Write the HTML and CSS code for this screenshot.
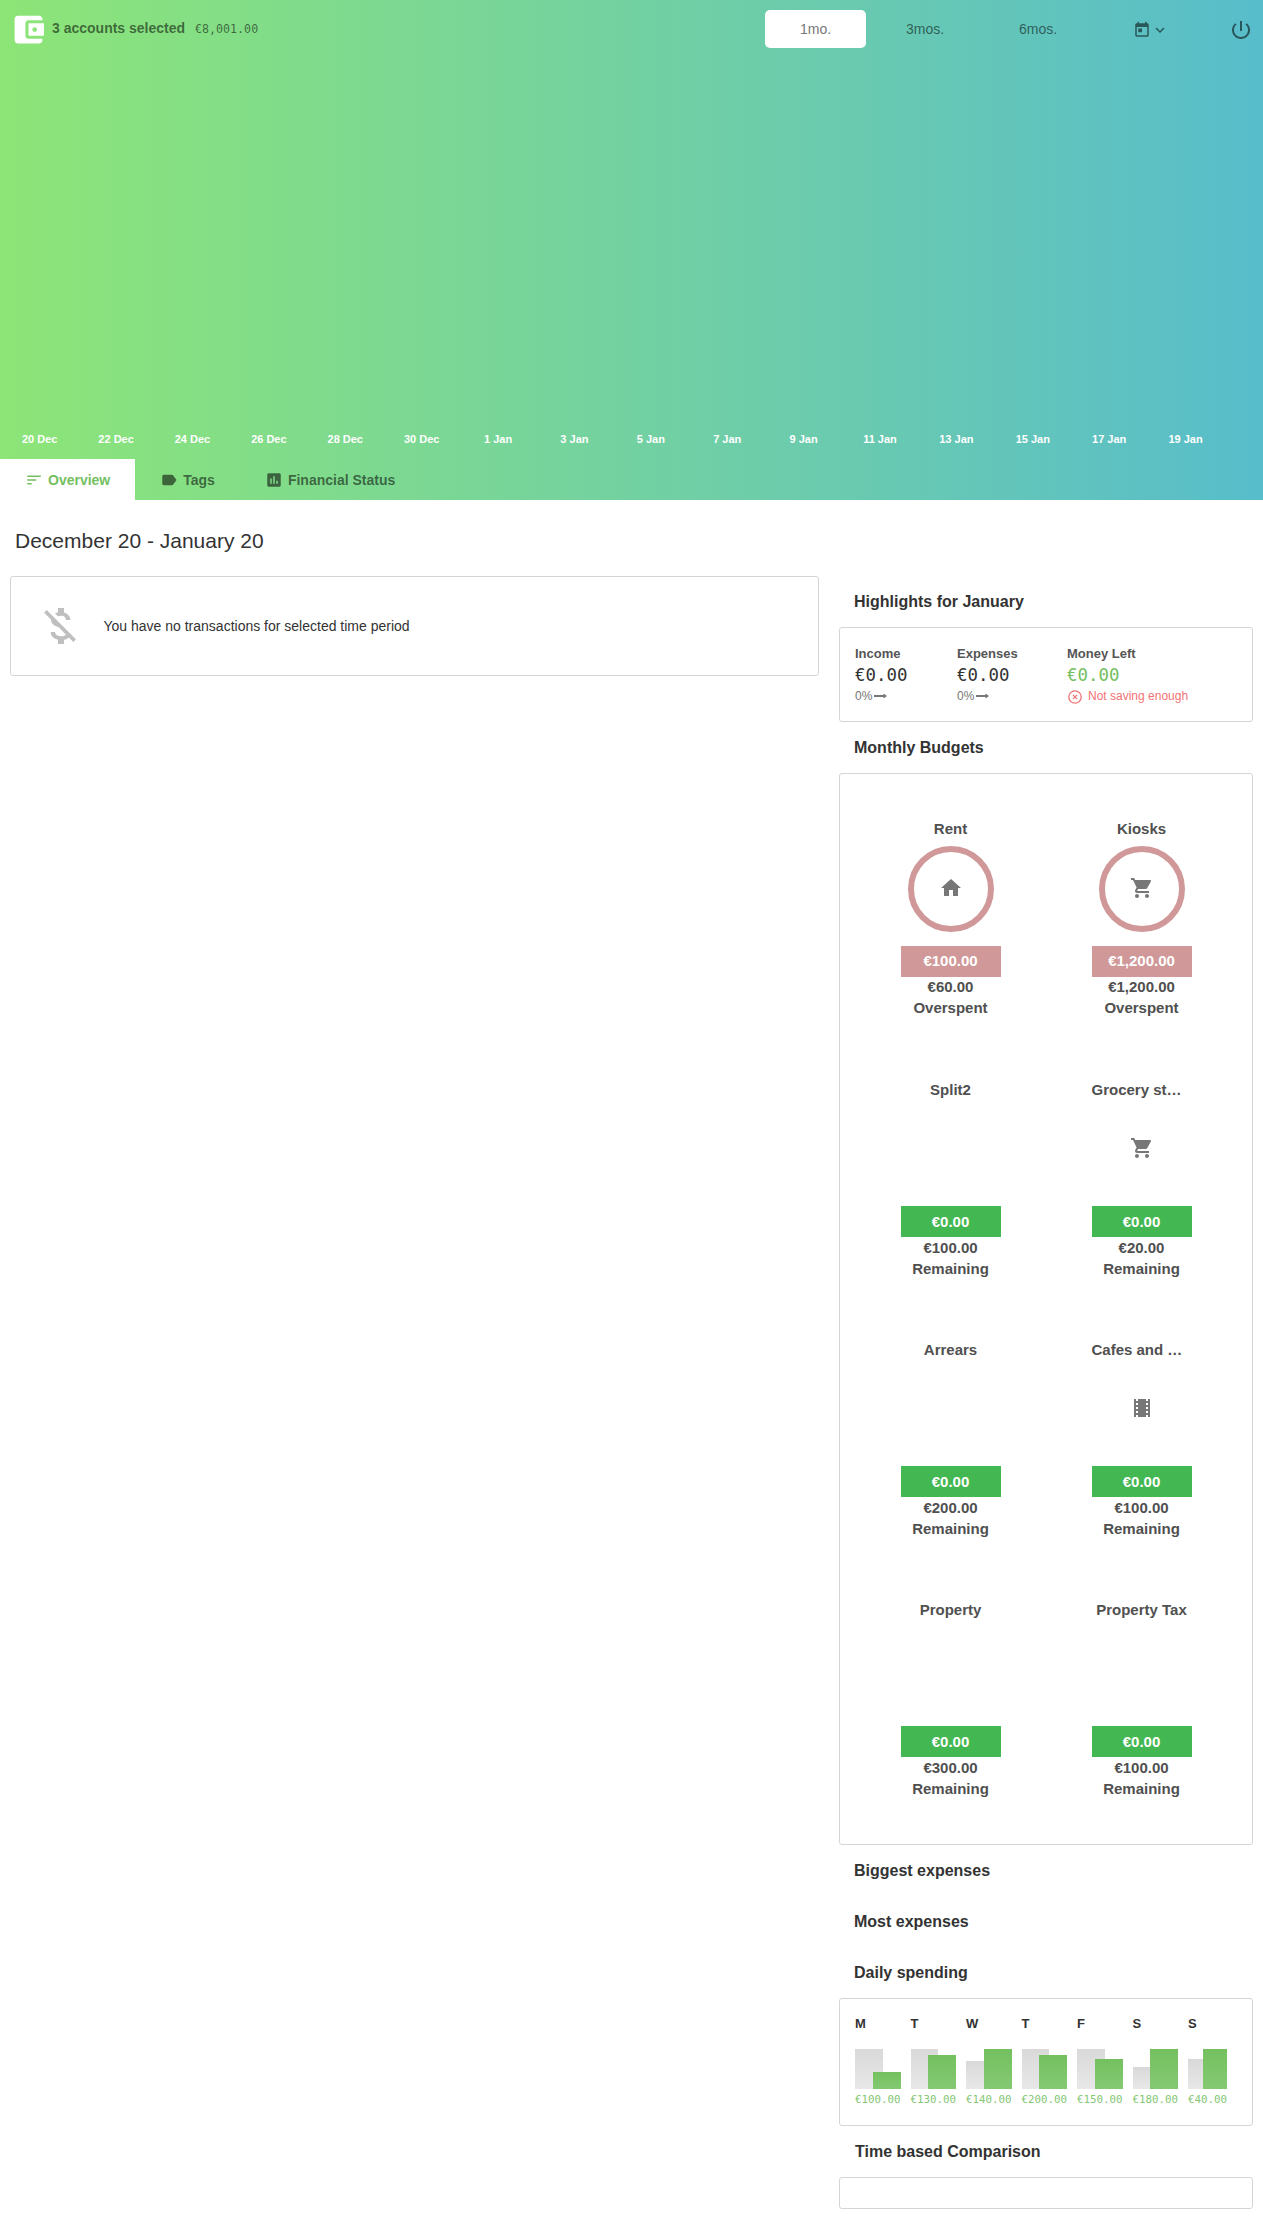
FILE: index.html
```html
<!DOCTYPE html>
<html lang="en">
<head>
<meta charset="utf-8">
<title>Overview</title>
<link rel="stylesheet" href="styles.css">
</head>
<body>
<svg class="sprite" aria-hidden="true">
  <symbol id="cart" viewBox="0 0 24 24"><path d="M7 18c-1.1 0-1.99.9-1.99 2S5.900 22 7 22s2-.9 2-2-.9-2-2-2zM1 2v2h2l3.600 7.590-1.350 2.450c-.16.28-.25.61-.25.96 0 1.100.9 2 2 2h12v-2H7.420c-.14 0-.25-.11-.25-.25l.03-.12.9-1.630h7.450c.75 0 1.410-.41 1.750-1.030l3.580-6.490c.08-.14.12-.31.12-.48 0-.55-.45-1-1-1H5.210l-.94-2H1zm16 16c-1.100 0-1.990.9-1.990 2s.89 2 1.990 2 2-.9 2-2-.9-2-2-2z"/></symbol>
  <symbol id="arrow" viewBox="0 0 14 8"><path d="M0 3h9.500V1.500l3.500 2.500-3.500 2.500V5H0z"/></symbol>
</svg>
<header class="hero">
  <div class="topbar">
    <svg class="logo" viewBox="0 0 24 24"><path d="M21 18v1c0 1.100-.9 2-2 2H5c-1.110 0-2-.9-2-2V5c0-1.100.89-2 2-2h14c1.100 0 2 .9 2 2v1h-9c-1.110 0-2 .9-2 2v8c0 1.100.89 2 2 2h9zm-9-2h10V8H12v8zm4-2.500c-.83 0-1.500-.67-1.500-1.500s.67-1.500 1.500-1.500 1.500.67 1.500 1.500-.67 1.500-1.500 1.500z"/></svg>
    <span class="accounts">3 accounts selected</span>
    <span class="balance mono">€8,001.00</span>
    <nav class="ranges">
      <span class="range range-active">1mo.</span>
      <span class="range">3mos.</span>
      <span class="range range-wide">6mos.</span>
      <span class="range range-picker">
        <svg class="icon" viewBox="0 0 24 24"><path d="M19 3h-1V1h-2v2H8V1H6v2H5c-1.110 0-1.990.9-1.990 2L3 19c0 1.100.89 2 2 2h14c1.100 0 2-.9 2-2V5c0-1.100-.9-2-2-2zm0 16H5V8h14v11zM7 10h5v5H7z"/></svg>
        <svg class="icon" viewBox="0 0 24 24"><path d="M16.590 8.590L12 13.170 7.410 8.590 6 10l6 6 6-6z"/></svg>
      </span>
    </nav>
    <svg class="power" viewBox="0 0 24 24"><path d="M13 3h-2v10h2V3zm4.830 2.170l-1.420 1.420C17.990 7.860 19 9.810 19 12c0 3.870-3.130 7-7 7s-7-3.130-7-7c0-2.190 1.010-4.140 2.580-5.420L6.170 5.170C4.230 6.820 3 9.260 3 12c0 4.970 4.030 9 9 9s9-4.030 9-9c0-2.740-1.230-5.180-3.170-6.830z"/></svg>
  </div>
  <div class="axis">
    <span>20 Dec</span><span>22 Dec</span><span>24 Dec</span><span>26 Dec</span><span>28 Dec</span><span>30 Dec</span><span>1 Jan</span><span>3 Jan</span><span>5 Jan</span><span>7 Jan</span><span>9 Jan</span><span>11 Jan</span><span>13 Jan</span><span>15 Jan</span><span>17 Jan</span><span>19 Jan</span>
  </div>
  <nav class="tabs">
    <a class="tab tab-active"><svg class="icon" viewBox="0 0 24 24"><path d="M3 18h6v-2H3v2zM3 6v2h18V6H3zm0 7h12v-2H3v2z"/></svg>Overview</a>
    <a class="tab"><svg class="icon" viewBox="0 0 24 24"><path d="M17.630 5.840C17.270 5.330 16.670 5 16 5L5 5.010C3.900 5.010 3 5.900 3 7v10c0 1.100.9 1.990 2 1.990L16 19c.67 0 1.270-.33 1.630-.84L22 12l-4.370-6.160z"/></svg>Tags</a>
    <a class="tab"><svg class="icon" viewBox="0 0 24 24"><path d="M19 3H5c-1.100 0-2 .9-2 2v14c0 1.100.9 2 2 2h14c1.100 0 2-.9 2-2V5c0-1.100-.9-2-2-2zM9 17H7v-7h2v7zm4 0h-2V7h2v10zm4 0h-2v-4h2v4z"/></svg>Financial Status</a>
  </nav>
</header>
<h1 class="period">December 20 - January 20</h1>
<main class="columns">
  <section class="card empty">
    <svg class="empty-icon" viewBox="0 0 24 24"><path d="M12.500 6.900c1.780 0 2.440.85 2.500 2.100h2.210c-.07-1.720-1.120-3.300-3.210-3.810V3h-3v2.160c-.53.12-1.030.3-1.480.54l1.470 1.470c.41-.17.91-.27 1.510-.27zM5.330 4.060L4.060 5.330 7.500 8.770c0 2.080 1.560 3.210 3.910 3.910l3.510 3.510c-.34.48-1.050.91-2.420.91-2.060 0-2.870-.92-2.980-2.100h-2.200c.12 2.190 1.760 3.420 3.680 3.830V21h3v-2.150c.96-.18 1.820-.55 2.450-1.120l2.220 2.220 1.270-1.270L5.330 4.060z"/></svg>
    <span>You have no transactions for selected time period</span>
  </section>
  <aside class="side">
    <h2 class="heading">Highlights for January</h2>
    <section class="card highlights">
      <div class="stat stat-income"><div class="stat-name">Income</div><div class="stat-value mono">€0.00</div><div class="stat-note">0%<svg class="arrow"><use href="#arrow"/></svg></div></div>
      <div class="stat stat-expenses"><div class="stat-name">Expenses</div><div class="stat-value mono">€0.00</div><div class="stat-note">0%<svg class="arrow"><use href="#arrow"/></svg></div></div>
      <div class="stat"><div class="stat-name">Money Left</div><div class="stat-value mono positive">€0.00</div><div class="stat-note warning"><svg class="warning-icon" viewBox="0 0 14 14"><circle cx="7" cy="7" r="6.200"/><path d="M4.900 4.900l4.200 4.200M9.100 4.900l-4.200 4.200"/></svg>Not saving enough</div></div>
    </section>
    <h2 class="heading">Monthly Budgets</h2>
    <section class="card budgets">
      <div class="budget over"><div class="name">Rent</div><div class="dial"><svg viewBox="0 0 24 24"><path d="M10 20v-6h4v6h5v-8h3L12 3 2 12h3v8z"/></svg></div><div class="spent">€100.00</div><div>€60.00</div><div>Overspent</div></div>
      <div class="budget over"><div class="name">Kiosks</div><div class="dial"><svg><use href="#cart"/></svg></div><div class="spent">€1,200.00</div><div>€1,200.00</div><div>Overspent</div></div>
      <div class="budget"><div class="name">Split2</div><div class="dial"></div><div class="spent">€0.00</div><div>€100.00</div><div>Remaining</div></div>
      <div class="budget"><div class="name name-long">Grocery st…</div><div class="dial"><svg><use href="#cart"/></svg></div><div class="spent">€0.00</div><div>€20.00</div><div>Remaining</div></div>
      <div class="budget"><div class="name">Arrears</div><div class="dial"></div><div class="spent">€0.00</div><div>€200.00</div><div>Remaining</div></div>
      <div class="budget"><div class="name name-long">Cafes and …</div><div class="dial"><svg viewBox="0 0 24 24"><path d="M18 3v2h-2V3H8v2H6V3H4v18h2v-2h2v2h8v-2h2v2h2V3h-2zM8 17H6v-2h2v2zm0-4H6v-2h2v2zm0-4H6V7h2v2zm10 8h-2v-2h2v2zm0-4h-2v-2h2v2zm0-4h-2V7h2v2z"/></svg></div><div class="spent">€0.00</div><div>€100.00</div><div>Remaining</div></div>
      <div class="budget"><div class="name">Property</div><div class="dial"></div><div class="spent">€0.00</div><div>€300.00</div><div>Remaining</div></div>
      <div class="budget"><div class="name">Property Tax</div><div class="dial"></div><div class="spent">€0.00</div><div>€100.00</div><div>Remaining</div></div>
    </section>
    <h2 class="heading">Biggest expenses</h2>
    <h2 class="heading">Most expenses</h2>
    <h2 class="heading">Daily spending</h2>
    <section class="card days">
      <div class="day"><b>M</b><div class="bars"><i style="height:40px"></i><i style="height:17px"></i></div><span class="mono">€100.00</span></div>
      <div class="day"><b>T</b><div class="bars"><i style="height:40px"></i><i style="height:34px"></i></div><span class="mono">€130.00</span></div>
      <div class="day"><b>W</b><div class="bars"><i style="height:28px"></i><i style="height:40px"></i></div><span class="mono">€140.00</span></div>
      <div class="day"><b>T</b><div class="bars"><i style="height:40px"></i><i style="height:34px"></i></div><span class="mono">€200.00</span></div>
      <div class="day"><b>F</b><div class="bars"><i style="height:40px"></i><i style="height:30px"></i></div><span class="mono">€150.00</span></div>
      <div class="day"><b>S</b><div class="bars"><i style="height:22px"></i><i style="height:40px"></i></div><span class="mono">€180.00</span></div>
      <div class="day day-short"><b>S</b><div class="bars"><i style="height:30px"></i><i style="height:40px"></i></div><span class="mono">€40.00</span></div>
    </section>
    <h2 class="heading heading-inset">Time based Comparison</h2>
    <section class="card"></section>
  </aside>
</main>
</body>
</html>
```
FILE: styles.css
```css
* { box-sizing: border-box; }
body {
  margin: 0;
  background: #fff;
  color: #333;
  font: 14px/21px "Liberation Sans", Arial, sans-serif;
}
svg { display: block; fill: currentColor; flex: none; }
.sprite { position: absolute; width: 0; height: 0; }
.mono { font-family: "DejaVu Sans Mono", "Liberation Mono", monospace; }
.icon { width: 18px; height: 18px; }

.hero {
  height: 500px;
  display: flex;
  flex-direction: column;
  background: linear-gradient(90deg, #8de577, #58bdcb);
}
.topbar {
  display: flex;
  align-items: center;
  height: 58px;
  padding: 0 10px;
  color: rgba(0, 0, 0, .55);
}
.logo { width: 37px; height: 37px; color: #fff; }
.accounts { margin: -1px 0 0 5px; font-weight: bold; }
.balance { margin-left: 10px; font-size: 11.65px; }
.ranges { display: flex; margin-left: auto; }
.range {
  display: flex;
  align-items: center;
  justify-content: center;
  width: 118px;
  height: 38px;
}
.range-active {
  width: 101px;
  background: #fff;
  border-radius: 5px;
  color: #777;
}
.range-wide { width: 108px; }
.range-picker { width: 118px; margin-right: 19px; padding-top: 2px; }
.power { width: 24px; height: 24px; margin-top: 2px; }

.axis {
  display: flex;
  margin: auto 0 9px 1.5px;
  color: #fff;
  font-size: 11px;
  font-weight: bold;
  text-align: center;
}
.axis span { flex: 0 0 76.4px; }
.tabs { display: flex; height: 41px; }
.tab {
  display: flex;
  align-items: center;
  gap: 5px;
  padding: 1px 25px 0;
  font-weight: bold;
  color: rgba(0, 0, 0, .55);
}
.tab-active { background: #fff; color: #74c061; }

.period {
  margin: 0;
  height: 76px;
  padding: 26px 15px 0;
  font-size: 21px;
  line-height: 30px;
  font-weight: normal;
}
.columns {
  display: grid;
  grid-template-columns: 809px 414px;
  column-gap: 20px;
  align-items: start;
  padding: 0 10px 10px;
}
.card {
  padding: 15px;
  border: 1px solid #d5d5d5;
  border-radius: 3px;
}
.empty {
  display: flex;
  align-items: center;
  gap: 19.5px;
  height: 100px;
  padding: 0 25px;
}
.empty-icon { width: 48px; height: 48px; color: #bfbfbf; }
.heading {
  margin: 0;
  padding-left: 15px;
  font-size: 16px;
  line-height: 51px;
}
.heading-inset { padding-left: 16px; }

.highlights { display: flex; height: 95px; }
.stat-income { width: 102px; }
.stat-expenses { width: 110px; }
.stat-name { font-size: 13px; font-weight: bold; line-height: 21px; color: #555; }
.stat-value { font-size: 17.4px; line-height: 23px; }
.positive { color: #74c061; }
.stat-note {
  display: flex;
  align-items: center;
  font-size: 12px;
  line-height: 19px;
  color: #777;
}
.arrow { width: 14px; height: 8px; margin: -1px 0 0 1.5px; }
.warning { color: #f27474; }
.warning-icon { width: 14px; height: 14px; margin: 0 6.5px 0 .5px; fill: none; stroke: currentColor; stroke-width: 1.3; }

.budgets {
  display: grid;
  grid-template-columns: 1fr 1fr;
  justify-items: center;
  font-size: 15px;
  font-weight: bold;
  color: #505050;
}
.budget { width: 100px; padding: 30px 0; text-align: center; }
.name { height: 21px; }
.name-long {
  text-align: left;
  white-space: nowrap;
}
.dial {
  display: flex;
  align-items: center;
  justify-content: center;
  width: 86px;
  height: 86px;
  margin: 6px auto 14px;
  padding-bottom: 2px;
  border: 6px solid transparent;
  border-radius: 50%;
  color: #777;
}
.dial svg { width: 24px; height: 24px; }
.over .dial { border-color: #d09898; }
.spent { height: 31px; background: #43b751; color: #fff; line-height: 31px; }
.over { padding-bottom: 31px; }
.over .name { line-height: 19px; }
.over .spent { background: #d09898; line-height: 29px; }
.over .spent + div { margin-top: -1px; }

.days { display: flex; gap: 10px; height: 128px; }
.day { width: 45.5px; }
.day b { display: block; height: 35px; font-size: 13px; line-height: 20px; }
.day-short { width: 39px; }
.bars { display: flex; align-items: flex-end; height: 40px; }
.bars i { flex: 0 0 61%; background: linear-gradient(#d9d9d9, #e8e8e8); }
.bars i + i { margin-left: -22%; background: linear-gradient(#74c05f, #84c972); }
.day span { display: block; font-size: 10.8px; line-height: 22px; color: #84c774; }
```
